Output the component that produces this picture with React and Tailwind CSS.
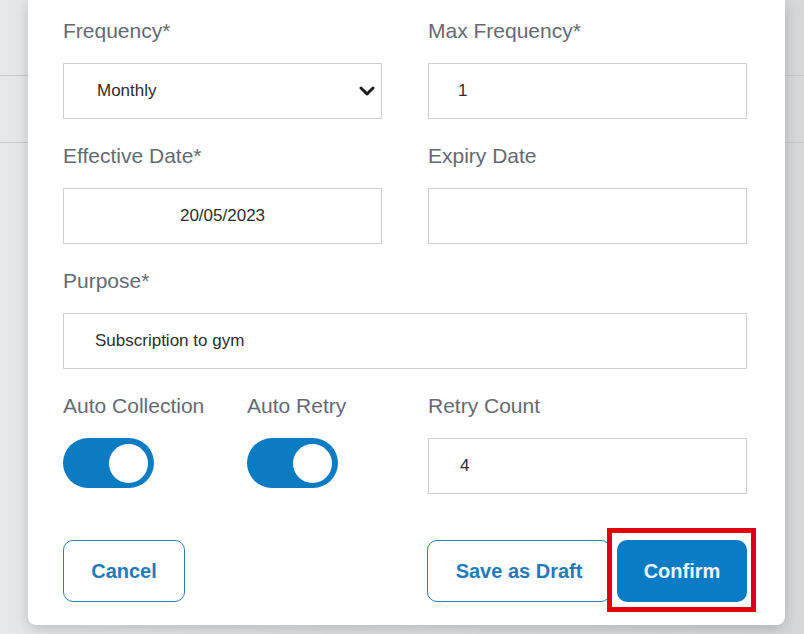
import React from 'react';

const font = { fontFamily: '"Liberation Sans", Arial, sans-serif' };

const Label = ({ children }) => (
  <div className="text-[21px] leading-[22px] text-[#646a74] whitespace-nowrap">{children}</div>
);

const Box = ({ children, className = '' }) => (
  <div className={`mt-[21px] h-[56px] border border-[#cfcfcf] bg-white flex items-center text-[17px] text-[#2e2e2e] ${className}`}>
    {children}
  </div>
);

const Toggle = () => (
  <div className="mt-[21px] w-[91px] h-[50px] rounded-full bg-[#0b7bc2] flex items-center justify-end pr-[6px]">
    <div className="w-[39px] h-[39px] rounded-full bg-white" />
  </div>
);

const App = () => {
  return (
    <div className="relative w-[804px] h-[634px] overflow-hidden bg-[#dadbdf]" style={font}>
      {/* page behind the modal */}
      <div className="absolute inset-0 flex flex-col bg-gradient-to-r from-[#e6e7ea] to-[#d6d7db]">
        <div className="h-[76px] border-b border-[#c7c8cc]" />
        <div className="h-[67px] border-b border-[#c7c8cc]" />
      </div>

      <div className="relative ml-[28px] w-[757px] bg-white rounded-b-[8px] shadow-[0_4px_14px_rgba(0,0,0,0.18)] pt-[20px] pb-[23px] pl-[35px] pr-[38px]">
        <div className="grid grid-cols-[319px_319px] gap-x-[46px] gap-y-[26px]">
          <div>
            <Label>Frequency*</Label>
            <Box className="pl-[33px] pr-[4px] justify-between">
              <span>Monthly</span>
              <svg width="16" height="10" viewBox="0 0 16 10" className="mr-[2px]">
                <path d="M2 2 L8 8 L14 2" fill="none" stroke="#1f1f1f" strokeWidth="3" strokeLinecap="round" strokeLinejoin="round" />
              </svg>
            </Box>
          </div>
          <div>
            <Label>Max Frequency*</Label>
            <Box className="pl-[29px]">1</Box>
          </div>

          <div>
            <Label>Effective Date*</Label>
            <Box className="justify-center">20/05/2023</Box>
          </div>
          <div>
            <Label>Expiry Date</Label>
            <Box />
          </div>

          <div className="col-span-2">
            <Label>Purpose*</Label>
            <Box className="pl-[31px]">Subscription to gym</Box>
          </div>

          <div className="grid grid-cols-[184px_1fr]">
            <div>
              <Label>Auto Collection</Label>
              <Toggle />
            </div>
            <div>
              <Label>Auto Retry</Label>
              <Toggle />
            </div>
          </div>
          <div>
            <Label>Retry Count</Label>
            <Box className="pl-[31px]">4</Box>
          </div>

          <div className="mt-[20px]">
            <button className="w-[122px] h-[62px] rounded-[10px] border-[1.5px] border-[#2d7db5] bg-white text-[20px] font-bold text-[#1f7bbd]">
              Cancel
            </button>
          </div>
          <div className="mt-[20px] flex gap-[6px] -ml-[1px]">
            <button className="w-[185px] h-[62px] rounded-[10px] border-[1.5px] border-[#2d7db5] bg-white text-[20px] font-bold text-[#1f7bbd]">
              Save as Draft
            </button>
            <div className="relative">
              <button className="w-[130px] h-[62px] rounded-[10px] bg-[#0a7cc6] text-[20px] font-bold text-[#eaf5ff]">
                Confirm
              </button>
              <span className="absolute -left-[10px] -right-[9px] -top-[12px] -bottom-[10px] border-[5px] border-[#e3000b] pointer-events-none" />
            </div>
          </div>
        </div>
      </div>
    </div>
  );
};

export default App;
